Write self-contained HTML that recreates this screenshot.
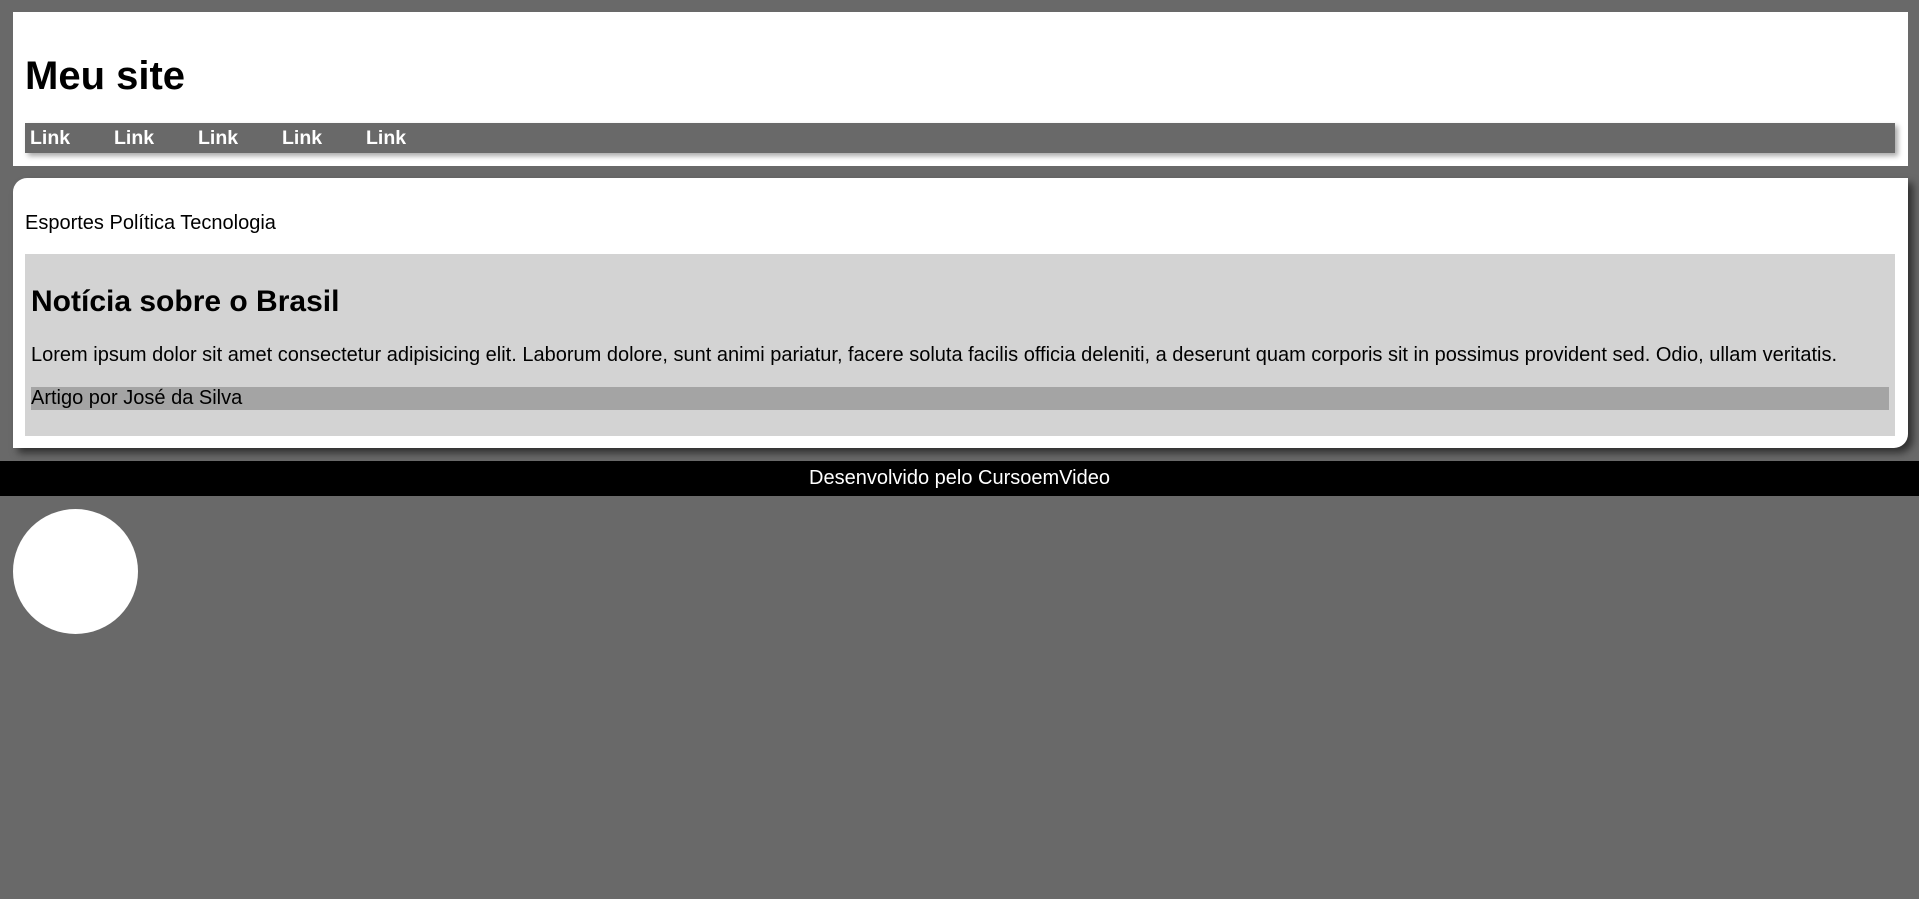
<!DOCTYPE html>
<html><head><meta charset="utf-8"><style>
*{margin:0;padding:0;box-sizing:border-box}
body{width:1919px;height:899px;background:#696969;font-family:"Liberation Sans",Arial,sans-serif;position:relative;overflow:hidden}
.hdr{position:absolute;left:13px;top:12px;width:1895px;height:154px;background:#fff}
.hdr h1{position:absolute;left:12px;top:41px;font-size:40px;font-weight:bold;line-height:46px}
.nav{position:absolute;left:12px;top:111px;width:1870px;height:30px;background:#696969;box-shadow:3px 3px 5px rgba(0,0,0,.35)}
.nav a{position:absolute;top:4px;color:#fff;font-weight:bold;font-size:19.5px;text-decoration:none;line-height:22px}
.main{position:absolute;left:13px;top:178px;width:1895px;height:270px;background:#fff;border-radius:14px 0 14px 0;box-shadow:5px 5px 8px rgba(0,0,0,.55)}
.cats{position:absolute;left:12px;top:34px;font-size:20px;line-height:22px}
.art{position:absolute;left:12px;top:76px;width:1870px;height:182px;background:#d3d3d3}
.art h2{position:absolute;left:6px;top:31px;font-size:30px;font-weight:bold;line-height:34px}
.art p{position:absolute;left:6px;top:90px;font-size:20px;line-height:22px;white-space:nowrap}
.by{position:absolute;left:6px;top:133px;width:1858px;height:23px;background:#a4a4a4;font-size:20px;line-height:23px}
.ft{position:absolute;left:0;top:461px;width:1919px;height:35px;background:#000;color:#fff;text-align:center;font-size:20px;line-height:35px}
.circ{position:absolute;left:13px;top:509px;width:125px;height:125px;border-radius:50%;background:#fff}
</style></head><body>
<div class="hdr"><h1>Meu site</h1>
<div class="nav"><a style="left:5px">Link</a><a style="left:89px">Link</a><a style="left:173px">Link</a><a style="left:257px">Link</a><a style="left:341px">Link</a></div></div>
<div class="main"><div class="cats">Esportes Política Tecnologia</div>
<div class="art"><h2>Notícia sobre o Brasil</h2>
<p>Lorem ipsum dolor sit amet consectetur adipisicing elit. Laborum dolore, sunt animi pariatur, facere soluta facilis officia deleniti, a deserunt quam corporis sit in possimus provident sed. Odio, ullam veritatis.</p>
<div class="by">Artigo por José da Silva</div></div></div>
<div class="ft">Desenvolvido pelo CursoemVideo</div>
<div class="circ"></div>
</body></html>
